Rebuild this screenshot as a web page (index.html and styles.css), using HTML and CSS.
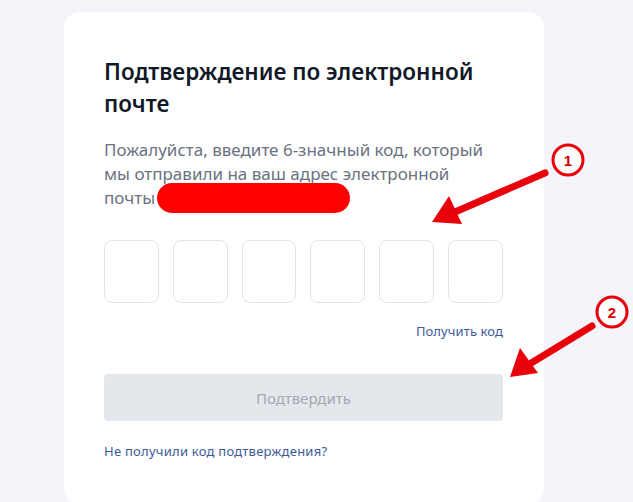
FILE: index.html
```html
<!DOCTYPE html>
<html lang="ru">
<head>
<meta charset="utf-8">
<link rel="stylesheet" href="styles.css">
</head>
<body>
<div class="card">
  <h1 class="title">Подтверждение по электронной почте</h1>
  <p class="desc">Пожалуйста, введите 6-значный код, который мы отправили на ваш адрес электронной почты<span class="redact"></span></p>
  <div class="codes">
    <div class="cell"></div><div class="cell"></div><div class="cell"></div><div class="cell"></div><div class="cell"></div><div class="cell"></div>
  </div>
  <div class="resend"><a class="link">Получить код</a></div>
  <button class="confirm">Подтвердить</button>
  <a class="link nocode">Не получили код подтверждения?</a>
</div>
<svg class="marks" width="633" height="502" viewBox="0 0 633 502">
  <g fill="none" stroke="#e8000b" stroke-width="3">
    <circle cx="568" cy="160" r="15" fill="#fff"/>
    <circle cx="612" cy="312" r="15" fill="#fff"/>
  </g>
  <g stroke="#e8000b" stroke-width="7" stroke-linecap="round">
    <line x1="545" y1="173" x2="455" y2="212"/>
    <line x1="592" y1="326" x2="528" y2="365"/>
  </g>
  <g fill="#e8000b">
    <polygon points="432,222 449,196 462,224"/>
    <polygon points="510,377 520,348 538,373"/>
  </g>
  <g fill="#d40000" font-family="'Liberation Sans', Arial, sans-serif" font-weight="bold" font-size="15" text-anchor="middle">
    <text x="568" y="166">1</text>
    <text x="612" y="318">2</text>
  </g>
</svg>
</body>
</html>
```
FILE: styles.css
```css
html, body {
  margin: 0;
  padding: 0;
}
body {
  background: #f4f5fb;
  width: 633px;
  height: 502px;
  overflow: hidden;
  position: relative;
  font-family: "Noto Sans", "Open Sans", sans-serif;
  padding-top: 12px;
  box-sizing: border-box;
}
.card {
  margin-left: 64px;
  width: 480px;
  height: 492px;
  box-sizing: border-box;
  background: #fff;
  border-radius: 16px;
  padding: 44px 41px 0 40px;
}
.title {
  margin: 0;
  font-size: 22.5px;
  line-height: 32px;
  font-weight: 600;
  color: #111827;
  letter-spacing: 0;
}
.desc {
  margin: 18px 0 0;
  font-size: 17px;
  line-height: 24px;
  color: #6b7280;
  letter-spacing: 0;
}
.redact {
  display: inline-block;
  width: 193px;
  height: 30px;
  background: #ff0000;
  border-radius: 15px;
  vertical-align: top;
  margin-top: -3px;
  margin-bottom: -3px;
  margin-left: 2px;
}
.codes {
  margin-top: 30px;
  display: flex;
  gap: 14px;
}
.cell {
  width: 55px;
  height: 63px;
  box-sizing: border-box;
  border: 1px solid #e3e4e8;
  border-radius: 8px;
}
.resend {
  margin-top: 19px;
  display: flex;
  justify-content: flex-end;
}
.link {
  font-size: 13px;
  line-height: 18px;
  color: #3d5a98;
  letter-spacing: 0.1px;
}
.confirm {
  display: block;
  margin-top: 34px;
  width: 100%;
  height: 47px;
  border: none;
  border-radius: 4px;
  background: #e4e8ec;
  color: #a3a9b1;
  font-family: inherit;
  font-size: 15px;
}
.nocode {
  display: block;
  margin-top: 21px;
  letter-spacing: 0.25px;
}
.marks {
  position: absolute;
  left: 0;
  top: 0;
  pointer-events: none;
}
```
